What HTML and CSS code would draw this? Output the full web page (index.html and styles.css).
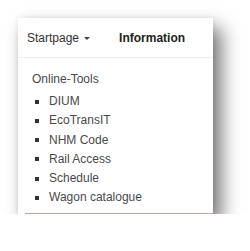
FILE: index.html
```html
<!DOCTYPE html>
<html>
<head>
<meta charset="utf-8">
<link rel="stylesheet" href="styles.css">
</head>
<body>
<div class="card">
  <div class="header">
    <span class="start">Startpage</span>
    <span class="caret"></span>
    <span class="info">Information</span>
  </div>
  <div class="content">
    <div class="title">Online-Tools</div>
    <ul class="list">
      <li>DIUM</li>
      <li>EcoTransIT</li>
      <li>NHM Code</li>
      <li>Rail Access</li>
      <li>Schedule</li>
      <li>Wagon catalogue</li>
    </ul>
  </div>
  <div class="accent"></div>
</div>
</body>
</html>
```
FILE: styles.css
```css
html, body {
  margin: 0;
  background: #fff;
}
body {
  padding: 18px 0 0 18px;
  font-family: "Liberation Sans", Arial, sans-serif;
  font-size: 12px;
}
.card {
  width: 195px;
  background: #fff;
  box-shadow: 8px 10px 18px rgba(0, 0, 0, 0.55), 0 0 5px rgba(0, 0, 0, 0.08);
}
.header {
  display: flex;
  align-items: center;
  padding-left: 9px;
  padding-top: 1px;
  box-sizing: border-box;
  height: 40px;
  border-bottom: 1px solid #f0f0f0;
}
.start {
  color: #333;
}
.caret {
  width: 0;
  height: 0;
  border-left: 3px solid transparent;
  border-right: 3px solid transparent;
  border-top: 3px solid #444;
  margin-left: 5px;
  margin-top: 1px;
}
.info {
  margin-left: 29px;
  font-weight: bold;
  color: #222;
}
.content {
  padding: 12px 0 6px 14px;
  color: #4a4a4a;
  line-height: 19.2px;
}
.title {
  margin-bottom: 3px;
}
.list {
  list-style: none;
  margin: 0;
  padding: 0 0 0 3px;
}
.list li {
  display: flex;
  align-items: center;
  gap: 10px;
}
.list li::before {
  content: "";
  width: 4px;
  height: 4px;
  background: #333;
  flex: none;
}
.accent {
  height: 1px;
  margin-left: 7px;
  background: #c9a0a0;
}
```
